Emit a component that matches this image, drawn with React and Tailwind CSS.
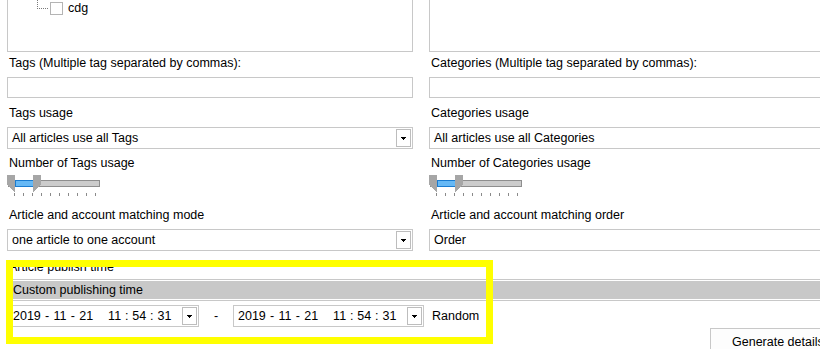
import React from 'react';

const Caret = () => (
  <svg width="5" height="3" viewBox="0 0 5 3" shapeRendering="crispEdges">
    <rect x="0" y="0" width="5" height="1" fill="#000" />
    <rect x="1" y="1" width="3" height="1" fill="#000" />
    <rect x="2" y="2" width="1" height="1" fill="#000" />
  </svg>
);

const DropButton = () => (
  <div className="w-[15px] h-[18px] shrink-0 border border-[#bdbdbd] bg-white flex items-center justify-center">
    <Caret />
  </div>
);

const Select = ({ text }) => (
  <div className="h-[22px] border border-[#c8c8c8] bg-white flex items-center justify-between pl-[4px] pr-px">
    <span className="leading-[14px] whitespace-nowrap">{text}</span>
    <DropButton />
  </div>
);

// range slider with two thumbs, 10 ticks
const RangeSlider = () => {
  const ticks = [];
  for (let i = 0; i < 10; i++) ticks.push(7 + i * 9);
  return (
    <svg width="95" height="22" viewBox="0 0 95 22" shapeRendering="crispEdges">
      <rect x="1.5" y="5.5" width="91" height="6" fill="#cccccc" stroke="#8e8e8e" />
      <rect x="8.5" y="5.5" width="18" height="6" fill="#66b9f6" stroke="#1b7cd0" />
      <polygon points="0,0 8,0 8,17 0,10" fill="#a6a6a6" />
      <polygon points="26,0 34,0 34,10 26,17" fill="#a6a6a6" />
      {ticks.map((x) => (
        <rect key={x} x={x} y="18" width="1" height="3" fill="#8a8a8a" />
      ))}
    </svg>
  );
};

const Label = ({ children, className }) => (
  <div className={`pl-[2px] leading-[14px] whitespace-nowrap ${className}`}>{children}</div>
);

const Column = ({ width, tree, tagLabel, usageLabel, usageValue, numLabel, matchLabel, matchValue }) => (
  <div className={`${width} shrink-0`}>
    {/* tree box */}
    <div className="h-[53px] border border-[#c8c8c8] bg-white">
      {tree && (
        <div className="flex items-start pl-[29px]">
          <div className="w-[11px] h-[9px] border-l border-b border-dotted border-[#7a7a7a]" />
          <div className="ml-[2px] mt-[2px] w-[13px] h-[13px] border border-[#b4b4b4] bg-white" />
          <span className="ml-[5px] mt-px leading-[14px]">cdg</span>
        </div>
      )}
    </div>
    <Label className="h-[25px] pt-[4px]">{tagLabel}</Label>
    <div className="h-[21px] border border-[#c8c8c8] bg-white" />
    <Label className="h-[29px] pt-[8px]">{usageLabel}</Label>
    <Select text={usageValue} />
    <Label className="h-[26px] pt-[7px]">{numLabel}</Label>
    <div className="h-[28px]">
      <RangeSlider />
    </div>
    <Label className="h-[26px] pt-[5px]">{matchLabel}</Label>
    <Select text={matchValue} />
  </div>
);

const DateBox = () => (
  <div className="w-[191px] h-[22px] shrink-0 border border-[#c8c8c8] bg-white flex items-center justify-between pl-[4px] pr-px">
    <span className="leading-[14px] whitespace-pre">
      <span className="[word-spacing:0.8px]">2019 - 11 - 21</span>
      <span className="ml-[15px] [word-spacing:0.4px]">11 : 54 : 31</span>
    </span>
    <DropButton />
  </div>
);

export default function App() {
  return (
    <div
      className="relative w-[820px] h-[349px] overflow-hidden bg-white text-[12.5px] text-black"
      style={{ fontFamily: '"Liberation Sans", Arial, sans-serif' }}
    >
      <div className="pl-[7px] w-[1000px]">
        <div className="flex gap-[16px] -mt-px">
          <Column
            width="w-[406px]"
            tree
            tagLabel="Tags (Multiple tag separated by commas):"
            usageLabel="Tags usage"
            usageValue="All articles use all Tags"
            numLabel="Number of Tags usage"
            matchLabel="Article and account matching mode"
            matchValue="one article to one account"
          />
          <Column
            width="w-[440px]"
            tagLabel="Categories (Multiple tag separated by commas):"
            usageLabel="Categories usage"
            usageValue="All articles use all Categories"
            numLabel="Number of Categories usage"
            matchLabel="Article and account matching order"
            matchValue="Order"
          />
        </div>

        {/* publish time */}
        <Label className="h-[28px] pt-[9px]">Article publish time</Label>
        <div className="w-[900px] border border-[#c8c8c8] p-px bg-white">
          <div className="h-[18px] bg-[#c8c8c8] pl-[4px] leading-[18px]">Custom publishing time</div>
        </div>
        <div className="flex items-center mt-[4px] ml-px h-[22px]">
          <DateBox />
          <div className="w-[34px] text-center leading-[14px]">-</div>
          <DateBox />
          <span className="ml-[8px] leading-[14px]">Random</span>
        </div>
        <div className="mt-px ml-[703px] w-[130px] h-[30px] border border-[#c8c8c8] bg-[#fdfdfd] pl-[21px] pt-[6px] leading-[14px] whitespace-nowrap">
          Generate details
        </div>
      </div>

      {/* highlight overlay */}
      <div className="absolute left-[6px] top-[260px] w-[487px] h-[84px] border-[7px] border-[#ffff00] pointer-events-none" />
    </div>
  );
}
